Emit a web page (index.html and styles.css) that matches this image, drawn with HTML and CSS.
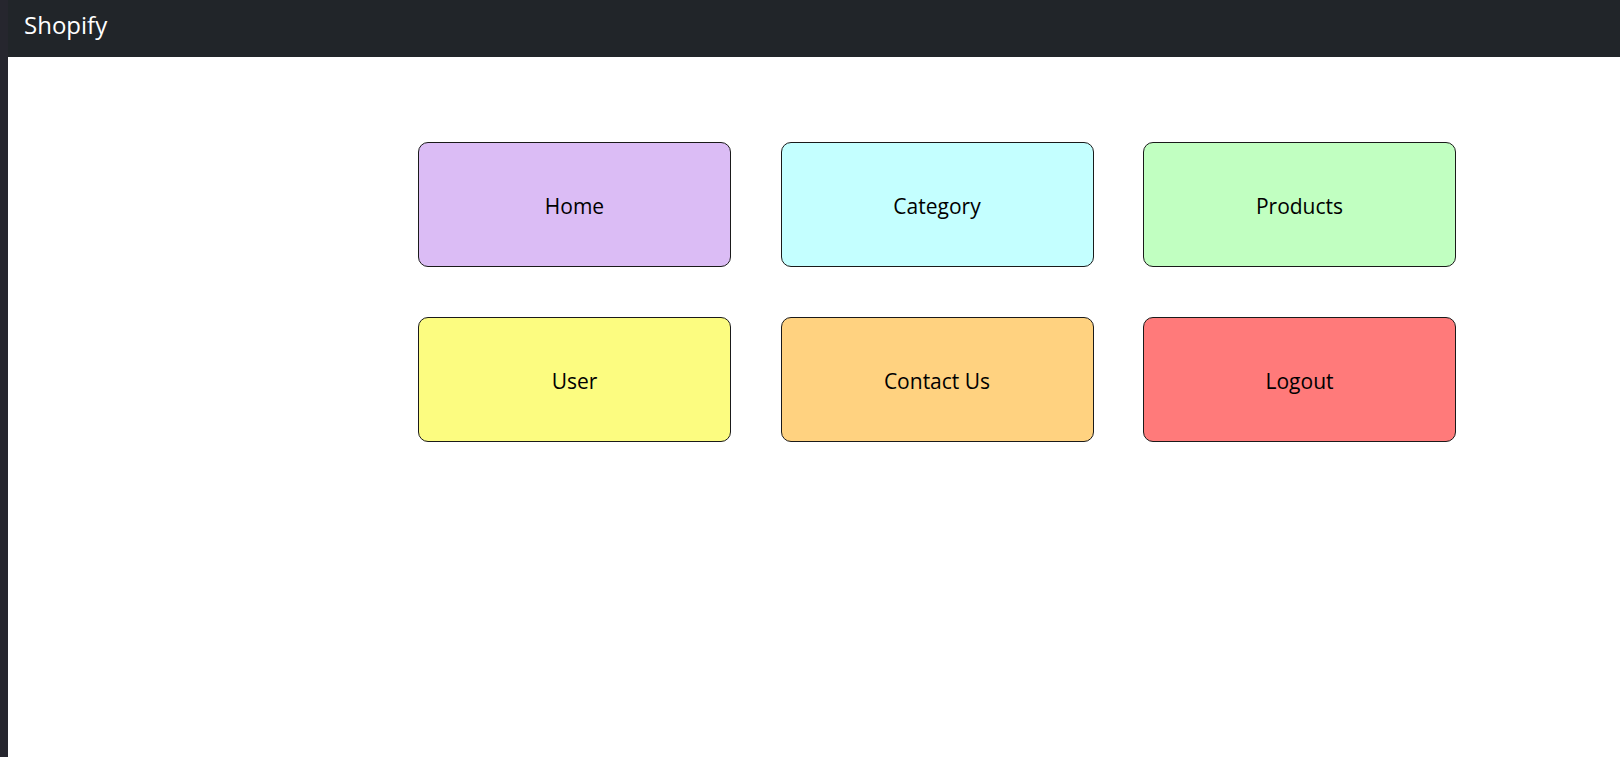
FILE: index.html
```html
<!DOCTYPE html>
<html lang="en">
<head>
<meta charset="utf-8">
<title>Shopify</title>
<link rel="stylesheet" href="styles.css">
</head>
<body>
<nav class="navbar">
  <span class="brand">Shopify</span>
</nav>
<main class="content">
  <div class="tiles">
    <a class="tile tile-home" href="#">Home</a>
    <a class="tile tile-category" href="#">Category</a>
    <a class="tile tile-products" href="#">Products</a>
    <a class="tile tile-user" href="#">User</a>
    <a class="tile tile-contact" href="#">Contact Us</a>
    <a class="tile tile-logout" href="#">Logout</a>
  </div>
</main>
</body>
</html>
```

FILE: styles.css
```css
html, body {
  margin: 0;
  padding: 0;
  height: 100%;
}

body {
  background: #ffffff;
  border-left: 8px solid #26262e;
  font-family: "Open Sans", "Noto Sans", "Liberation Sans", sans-serif;
  color: #000;
  box-sizing: border-box;
}

.navbar {
  height: 57px;
  background: #212529;
  display: flex;
  align-items: center;
  padding-left: 16px;
}

.brand {
  color: #ffffff;
  font-size: 24px;
  line-height: 1;
  margin-top: -8px;
}

.content {
  padding-top: 85px;
  padding-left: 410px;
}

.tiles {
  display: grid;
  grid-template-columns: repeat(3, 313px);
  grid-auto-rows: 125px;
  column-gap: 49.5px;
  row-gap: 50px;
}

.tile {
  display: flex;
  align-items: center;
  justify-content: center;
  padding-top: 2px;
  border: 1px solid #1a1a1a;
  border-radius: 10px;
  box-sizing: border-box;
  text-decoration: none;
  color: #000;
  font-size: 21px;
}

.tile-home { background: #dbbcf5; }
.tile-category { background: #c4ffff; }
.tile-products { background: #c1ffc1; }
.tile-user { background: #fcfc80; }
.tile-contact { background: #ffd280; }
.tile-logout { background: #ff7a7a; }
```
